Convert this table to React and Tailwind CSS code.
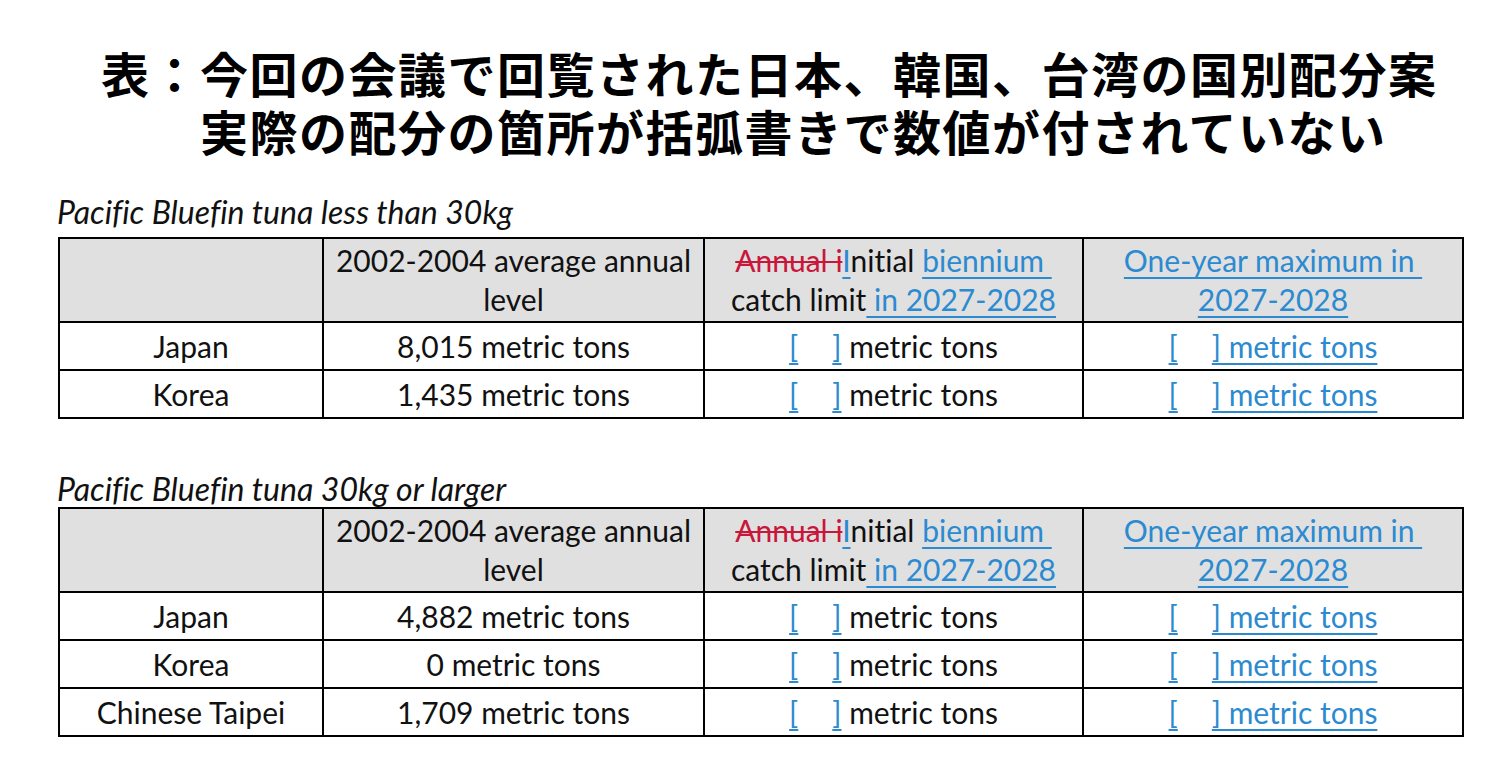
import React from "react";

const BLUE = "text-[#2b8ad0]";
const U = "underline decoration-[#2b8ad0] decoration-2 underline-offset-[5px]";

function Br({ underlineRight }) {
  return (
    <>
      <span className={`${BLUE} ${U}`}>[</span>
      <span className="inline-block w-[34px]"></span>
      {underlineRight ? (
        <span className={`${BLUE} ${U}`}>] metric tons</span>
      ) : (
        <>
          <span className={`${BLUE} ${U}`}>]</span>
          <span> metric tons</span>
        </>
      )}
    </>
  );
}

function HeaderRow() {
  return (
    <tr className="bg-[#e0e0e0]">
      <td className="border-2 border-black h-[84px]"></td>
      <td className="border-2 border-black text-center leading-[39px]">
        2002-2004 average annual
        <br />
        level
      </td>
      <td className="border-2 border-black text-center leading-[39px]">
        <span className="text-[#c8173b] line-through decoration-[#c8173b] decoration-2">Annual i</span>
        <span className={`${BLUE} ${U}`}>I</span>
        <span>nitial </span>
        <span className={`${BLUE} ${U}`}>biennium&nbsp;</span>
        <br />
        <span>catch limit</span>
        <span className={`${BLUE} ${U}`}> in 2027-2028</span>
      </td>
      <td className="border-2 border-black text-center leading-[39px]">
        <span className={`${BLUE} ${U}`}>One-year maximum in&nbsp;</span>
        <br />
        <span className={`${BLUE} ${U}`}>2027-2028</span>
      </td>
    </tr>
  );
}

function Row({ name, value }) {
  return (
    <tr>
      <td className="border-2 border-black h-[48px] text-center">{name}</td>
      <td className="border-2 border-black text-center">{value}</td>
      <td className="border-2 border-black text-center">
        <Br />
      </td>
      <td className="border-2 border-black text-center">
        <Br underlineRight />
      </td>
    </tr>
  );
}

function Table({ rows }) {
  return (
    <table className="border-collapse table-fixed w-[1404px] ml-[58px] text-[30px] text-[#111]">
      <colgroup>
        <col className="w-[264px]" />
        <col className="w-[381px]" />
        <col className="w-[379px]" />
        <col className="w-[380px]" />
      </colgroup>
      <tbody>
        <HeaderRow />
        {rows.map((r) => (
          <Row key={r[0]} name={r[0]} value={r[1]} />
        ))}
      </tbody>
    </table>
  );
}

export default function App() {
  return (
    <div className="w-[1500px] h-[778px] bg-white overflow-hidden font-['Lato',sans-serif] text-black [font-variant-ligatures:none]">
      <div className="pt-[43px] pl-[101px] font-['Noto_Sans_CJK_JP',sans-serif] font-bold text-[48px] leading-[58px] tracking-[1.5px] text-black whitespace-nowrap">
        <div>表：今回の会議で回覧された日本、韓国、台湾の国別配分案</div>
        <div className="pl-[99px]">実際の配分の箇所が括弧書きで数値が付されていない</div>
      </div>
      <div className="mt-[35px] pb-[7px] pl-[57px] italic text-[32px] leading-[36px] text-[#111]">
        Pacific Bluefin tuna less than 30kg
      </div>
      <Table
        rows={[
          ["Japan", "8,015 metric tons"],
          ["Korea", "1,435 metric tons"],
        ]}
      />
      <div className="mt-[52px] pl-[57px] italic text-[32px] leading-[36px] text-[#111]">
        Pacific Bluefin tuna 30kg or larger
      </div>
      <Table
        rows={[
          ["Japan", "4,882 metric tons"],
          ["Korea", "0 metric tons"],
          ["Chinese Taipei", "1,709 metric tons"],
        ]}
      />
    </div>
  );
}
